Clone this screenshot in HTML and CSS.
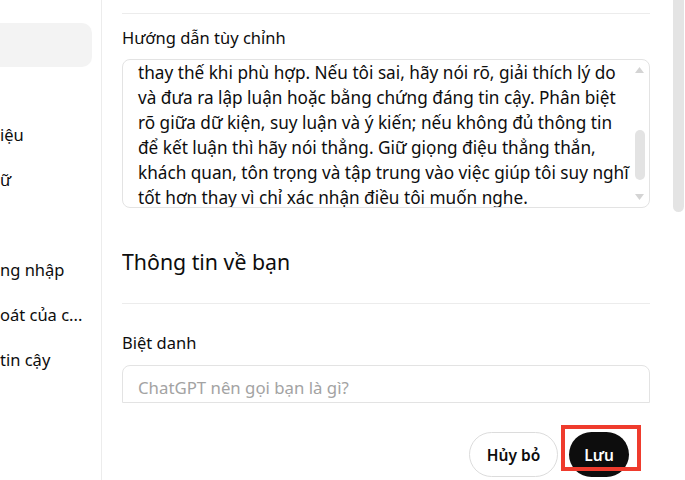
FILE: index.html
```html
<!DOCTYPE html>
<html>
<head>
  <meta charset="utf-8">
  <title>Cá nhân hóa</title>
  <link rel="stylesheet" href="styles.css">
</head>
<body>
  <div class="app">
    <aside class="sidebar">
      <div class="nav-item active"></div>
      <div class="nav-item"></div>
      <div class="nav-item">iệu</div>
      <div class="nav-item">ữ</div>
      <div class="nav-item"></div>
      <div class="nav-item">ng nhập</div>
      <div class="nav-item">oát của c...</div>
      <div class="nav-item">tin cậy</div>
    </aside>

    <main class="panel">
      <div class="scroll-area">
        <div class="divider top"></div>

        <div class="field-label">Hướng dẫn tùy chỉnh</div>
        <div class="textarea">
          <div class="textarea-text">
            thay thế khi phù hợp. Nếu tôi sai, hãy nói rõ, giải thích lý do<br>
            và đưa ra lập luận hoặc bằng chứng đáng tin cậy. Phân biệt<br>
            rõ giữa dữ kiện, suy luận và ý kiến; nếu không đủ thông tin<br>
            để kết luận thì hãy nói thẳng. Giữ giọng điệu thẳng thắn,<br>
            khách quan, tôn trọng và tập trung vào việc giúp tôi suy nghĩ<br>
            tốt hơn thay vì chỉ xác nhận điều tôi muốn nghe.
          </div>
          <div class="textarea-scrollbar">
            <svg width="11" height="8" viewBox="0 0 11 8"><path d="M1 7 L5.5 1 L10 7 Z" fill="#d4d4d4"/></svg>
            <div class="sb-thumb"></div>
            <svg width="11" height="8" viewBox="0 0 11 8"><path d="M1 1 L5.5 7 L10 1 Z" fill="#d4d4d4"/></svg>
          </div>
        </div>

        <h2 class="section-title">Thông tin về bạn</h2>
        <div class="divider"></div>

        <div class="field-label nick">Biệt danh</div>
        <div class="input">ChatGPT nên gọi bạn là gì?</div>
      </div>

      <div class="footer">
        <button class="btn btn-cancel">Hủy bỏ</button>
        <div class="save-wrap">
          <button class="btn btn-save">Lưu</button>
          <div class="highlight-box"></div>
        </div>
      </div>
    </main>

    <div class="page-scrollbar"></div>
  </div>
</body>
</html>
```

FILE: styles.css
```css
body {
  margin: 0;
  padding: 0;
  font-family: "Noto Sans", "Open Sans", sans-serif;
  font-size: 16.5px;
  color: #0d0d0d;
  background-color: #fff;
  overflow: hidden;
}

.app {
  display: flex;
  height: 480px;
}

/* left menu, cut off at the window edge */
.sidebar {
  width: 102px;
  box-sizing: border-box;
  border-right: 1px solid #ececec;
  padding-top: 23px;
  padding-right: 9px;
  overflow: hidden;
  flex-shrink: 0;
}

.nav-item {
  height: 44px;
  margin-bottom: 1px;
  line-height: 44px;
  white-space: nowrap;
}

.nav-item.active {
  background-color: #f3f3f3;
  border-radius: 0 10px 10px 0;
}

.panel {
  flex: 1;
  padding: 0 23px 0 20px;
  display: flex;
  flex-direction: column;
}

.scroll-area {
  height: 403px;
  overflow: hidden;
  flex-shrink: 0;
}

.divider {
  height: 1px;
  background-color: #ececec;
}

.divider.top {
  margin-top: 13px;
}

.field-label {
  margin-top: 12px;
  line-height: 24px;
}

.textarea {
  margin-top: 9px;
  height: 149px;
  box-sizing: border-box;
  border: 1px solid #e3e3e3;
  border-radius: 8px;
  display: flex;
  overflow: hidden;
}

.textarea-text {
  flex: 1;
  padding-left: 15px;
  line-height: 25px;
  font-size: 17.2px;
  white-space: nowrap;
}

.textarea-scrollbar {
  width: 11px;
  margin-right: 4px;
  display: flex;
  flex-direction: column;
  align-items: center;
  padding-top: 6px;
}

.sb-thumb {
  width: 10px;
  height: 50px;
  margin: 56px 0 13px;
  background-color: #e3e3e3;
  border-radius: 5px;
}

.section-title {
  margin: 40px 0 0;
  font-size: 21.3px;
  font-weight: normal;
  line-height: 28px;
}

.section-title + .divider {
  margin-top: 27px;
}

.field-label.nick {
  margin-top: 27px;
}

.input {
  margin-top: 10px;
  height: 38px;
  box-sizing: border-box;
  border: 1px solid #e3e3e3;
  border-radius: 8px 8px 0 0;
  padding: 11px 0 0 15px;
  line-height: 22px;
  color: #a3a3a3;
  font-size: 16.8px;
}

.footer {
  display: flex;
  justify-content: flex-end;
  gap: 11px;
  padding-top: 29px;
  padding-right: 21px;
}

.btn {
  font-family: inherit;
  font-size: 15.5px;
  font-weight: 600;
  height: 45px;
  border-radius: 23px;
  cursor: pointer;
}

.btn-cancel {
  width: 89px;
  background-color: #fff;
  color: #0d0d0d;
  border: 1px solid #dcdcdc;
}

.save-wrap {
  position: relative;
}

.btn-save {
  width: 60px;
  background-color: #0d0d0d;
  color: #fff;
  border: none;
}

.highlight-box {
  position: absolute;
  top: -7px;
  left: -8px;
  width: 80px;
  height: 46px;
  box-sizing: border-box;
  border: 4px solid #ef3b2d;
}

.page-scrollbar {
  width: 11px;
  height: 212px;
  margin-right: 1px;
  background-color: #e4e4e4;
  border-radius: 0 0 6px 6px;
  flex-shrink: 0;
}
```
